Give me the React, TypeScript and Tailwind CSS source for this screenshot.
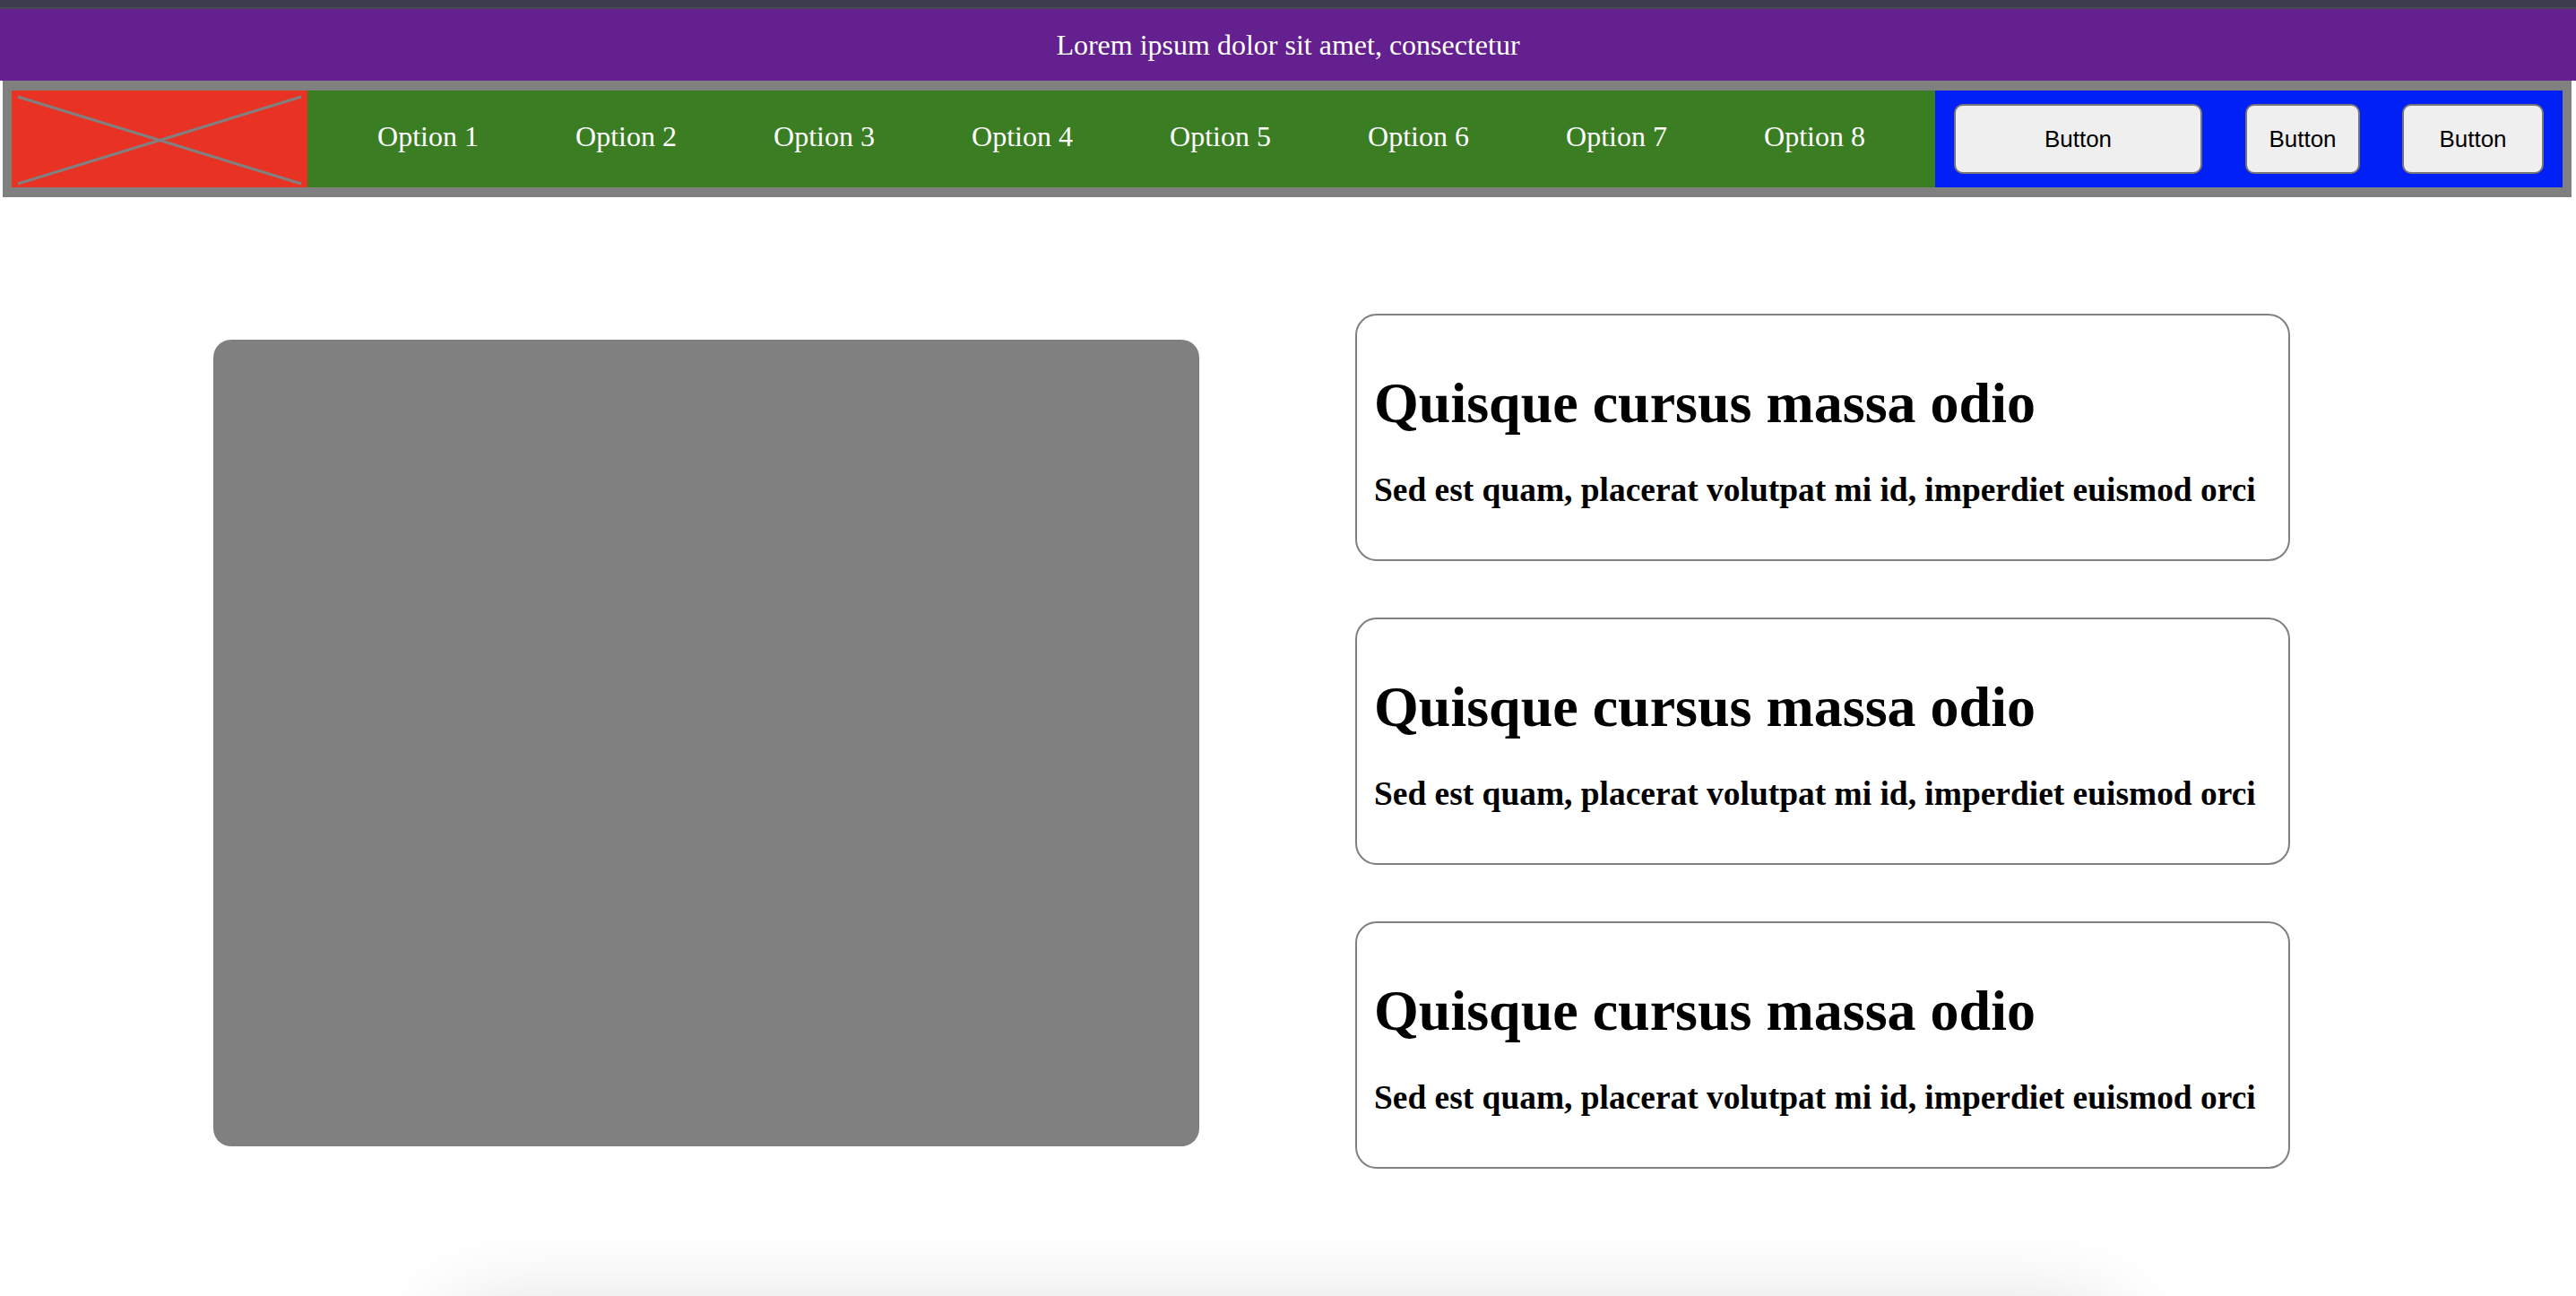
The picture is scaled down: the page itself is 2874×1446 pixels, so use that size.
import React from "react";

const options = ["Option 1", "Option 2", "Option 3", "Option 4", "Option 5", "Option 6", "Option 7", "Option 8"];

function Card() {
  return (
    <div className="h-[276px] w-[1043px] rounded-[24px] border-2 border-[#808080] bg-white pl-[19px] pt-[61px] text-black">
      <h1 className="text-[64px] font-bold leading-[74px]">Quisque cursus massa odio</h1>
      <h3 className="mt-[38px] text-[37.44px] font-bold leading-[43px]">
        Sed est quam, placerat volutpat mi id, imperdiet euismod orci
      </h3>
    </div>
  );
}

export default function App() {
  return (
    <div className="min-h-[1446px] w-[2874px] overflow-hidden bg-white font-['Liberation_Serif','Times_New_Roman',serif]">
      <div className="h-[8px] bg-[#3b3c4d]" />
      <div className="h-[2px] bg-[#474852]" />
      <div className="flex h-[80px] items-center justify-center bg-[#64208f] text-[32px] text-white">
        Lorem ipsum dolor sit amet, consectetur
      </div>
      <nav className="ml-[3px] flex h-[130px] w-[2866px] bg-[#808080] px-[10px] pb-[11px] pt-[11px]">
        <div className="relative w-[330px] bg-[#e83324]">
          <svg className="absolute inset-0 h-full w-full" viewBox="0 0 330 108" preserveAspectRatio="none">
            <line x1="7" y1="7" x2="323" y2="104" stroke="#808080" strokeWidth="3" />
            <line x1="7" y1="104" x2="323" y2="7" stroke="#808080" strokeWidth="3" />
          </svg>
        </div>
        <div className="flex flex-1 items-center bg-[#3a7d22] px-[24px]">
          {options.map((o) => (
            <div key={o} className="mb-[6px] w-[221px] text-center text-[32px] leading-[37px] text-white">
              {o}
            </div>
          ))}
        </div>
        <div className="flex w-[700px] items-center bg-[#0020f6] pl-[21px] font-['Liberation_Sans',Arial,sans-serif] text-[26px] text-black">
          <button className="h-[78px] w-[277px] rounded-[10px] border-2 border-[#767676] bg-[#efefef]">Button</button>
          <button className="ml-[48px] h-[78px] w-[128px] rounded-[10px] border-2 border-[#767676] bg-[#efefef]">Button</button>
          <button className="ml-[47px] h-[78px] w-[158px] rounded-[10px] border-2 border-[#767676] bg-[#efefef]">Button</button>
        </div>
      </nav>
      <main className="flex items-start gap-[174px] pl-[238px] pt-[130px]">
        <div className="mt-[29px] h-[900px] w-[1100px] rounded-[20px] bg-[#808080]" />
        <div className="flex flex-col gap-[63px]">
          <Card />
          <Card />
          <Card />
        </div>
      </main>
      <footer className="ml-[500px] mt-[162px] h-[200px] w-[1860px] rounded-[40px] bg-white shadow-[0_0_100px_rgba(0,0,0,0.17)]" />
    </div>
  );
}
